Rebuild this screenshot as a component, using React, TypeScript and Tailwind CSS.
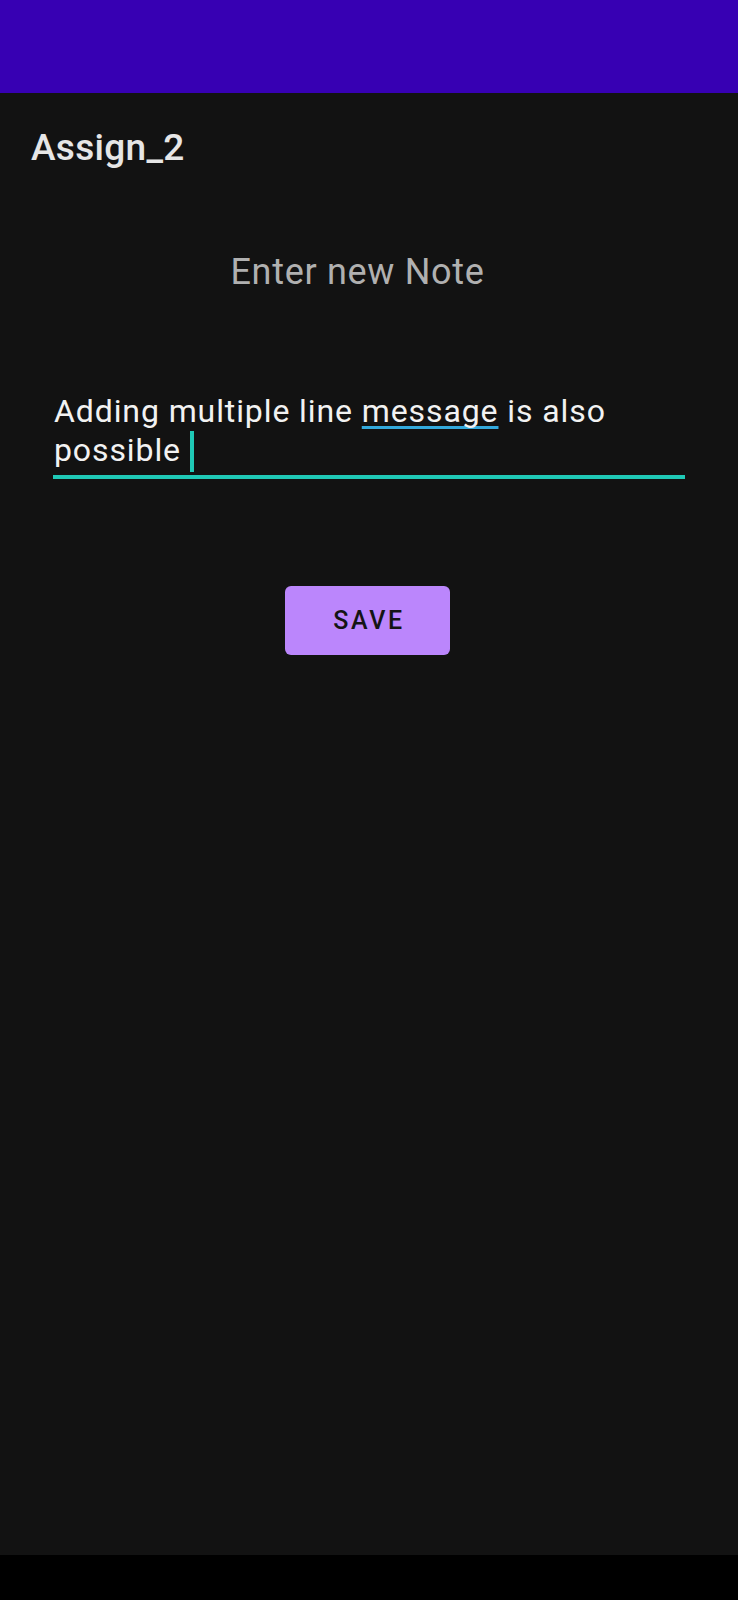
export default function App() {
    return (
        <div className="w-[738px] h-[1600px] flex flex-col bg-black font-['Roboto',sans-serif]">
            <div className="h-[93px] bg-[#3700b3]"></div>

            <div className="flex-1 flex flex-col bg-[#121212]">
                <h1 className="pl-[31px] pt-[36px] text-[37px] leading-none font-medium tracking-[0.3px] text-[#e6e6e6]">Assign_2</h1>

                <div className="flex justify-center pr-[23px] mt-[88px]">
                    <p className="text-[36px] leading-none tracking-[0.7px] text-[#b0b0b0]">Enter new Note</p>
                </div>

                <div className="mx-[53px] mt-[102px]">
                    <p className="h-[77px] pl-[1px] text-[32px] leading-[38.5px] tracking-[0.9px] text-[#f2f2f2]">
                        Adding multiple line{" "}
                        <span className="underline decoration-[#33a9dc] decoration-[3px] underline-offset-[4px] [text-decoration-skip-ink:none]">message</span>{" "}
                        is also possible{" "}
                        <span className="inline-block w-[4px] h-[41px] align-[-11px] bg-[#1fc9b6]"></span>
                    </p>
                    <div className="mt-[6px] h-[4px] bg-[#1fc9b6]"></div>
                </div>

                <div className="flex justify-center pr-[3px] mt-[107px]">
                    <button className="w-[165px] h-[69px] rounded-[6px] bg-[#bb86fc] pl-[3px] text-[25px] font-medium tracking-[2.6px] text-[#141414]">
                        SAVE
                    </button>
                </div>
            </div>

            <div className="h-[45px] bg-black"></div>
        </div>
    );
}
